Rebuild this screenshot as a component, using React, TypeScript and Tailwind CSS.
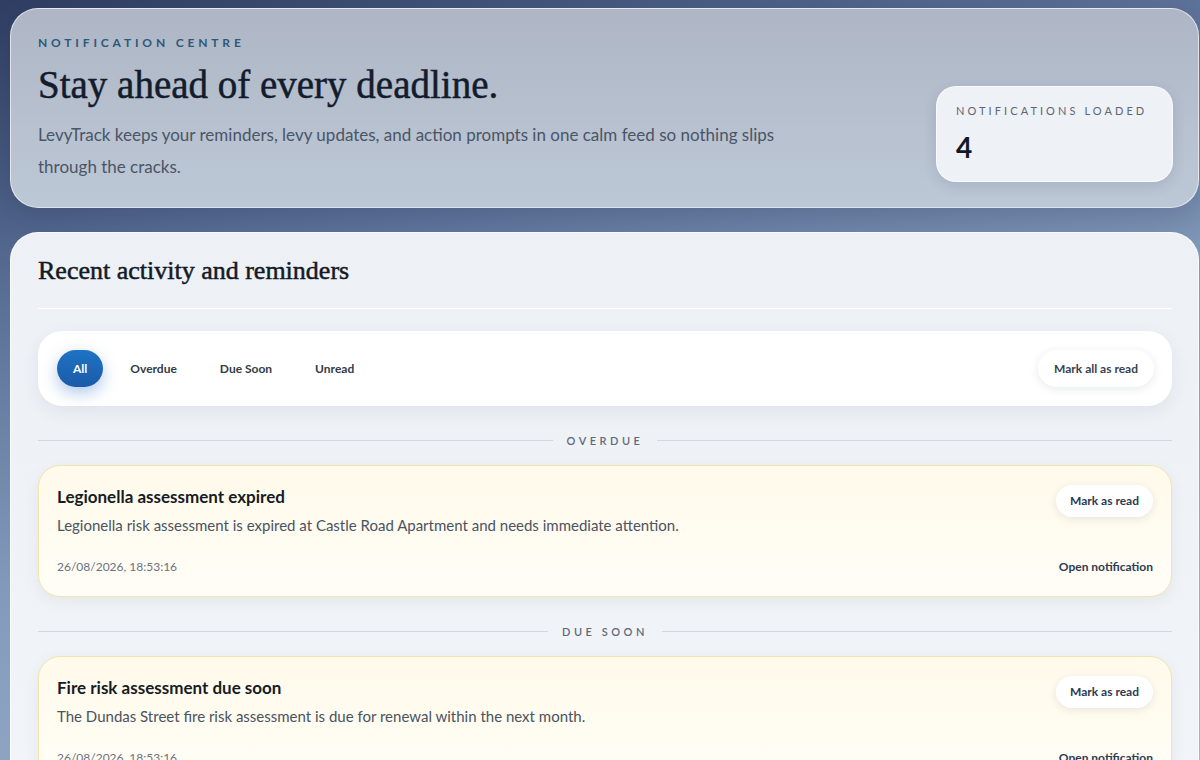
import { useState } from 'react'

type Notice = {
  id: string
  group: 'Overdue' | 'Due Soon'
  title: string
  body: string
  stamp: string
}

const notices: Notice[] = [
  {
    id: 'n1',
    group: 'Overdue',
    title: 'Legionella assessment expired',
    body: 'Legionella risk assessment is expired at Castle Road Apartment and needs immediate attention.',
    stamp: '26/08/2026, 18:53:16',
  },
  {
    id: 'n2',
    group: 'Due Soon',
    title: 'Fire risk assessment due soon',
    body: 'The Dundas Street fire risk assessment is due for renewal within the next month.',
    stamp: '26/08/2026, 18:53:16',
  },
]

const filters = ['All', 'Overdue', 'Due Soon', 'Unread']

const sans = "font-['Lato','Noto_Sans',sans-serif]"
// regular serif with a hairline stroke, closer to the medium weight in the design
const serif = "font-['Liberation_Serif','Times_New_Roman',serif] [-webkit-text-stroke:0.5px_currentColor]"

function Divider({ label }: { label: string }) {
  return (
    <div className="mt-[27px] mb-[18px] flex h-[14px] items-center gap-[14px]">
      <div className="h-px flex-1 bg-[#cfd8e3]" />
      <span className="text-[11px] font-semibold uppercase leading-none tracking-[0.32em] text-[#5f6b7a]">{label}</span>
      <div className="h-px flex-1 bg-[#cfd8e3]" />
    </div>
  )
}

function NoticeCard({ n }: { n: Notice }) {
  return (
    <article className="rounded-[22px] border border-[#f1e4ae] bg-[linear-gradient(180deg,#fffaea_0%,#fffdf7_100%)] px-[18px] pt-[19px] pb-[20px] shadow-[0_4px_14px_rgba(120,110,60,0.08)]">
      <div className="flex items-start justify-between gap-4">
        <div>
          <h3 className="text-[17px] font-bold leading-[24px] text-[#161c26]">{n.title}</h3>
          <p className="mt-[5px] text-[15px] leading-[22px] text-[#4a5361]">{n.body}</p>
        </div>
        <button
          type="button"
          className="h-[32px] shrink-0 rounded-full bg-white px-[14px] text-[12px] font-bold text-[#2b3b52] shadow-[0_2px_8px_rgba(30,40,60,0.10)]"
        >
          Mark as read
        </button>
      </div>
      <div className="mt-[22px] flex items-center justify-between text-[12px] leading-[18px]">
        <span className="text-[#6a7280]">{n.stamp}</span>
        <button type="button" className="font-bold text-[#2b3b52]">
          Open notification
        </button>
      </div>
    </article>
  )
}

export default function App() {
  const [active, setActive] = useState('All')

  return (
    <div
      className={`${sans} min-h-[760px] overflow-hidden bg-[linear-gradient(165deg,#2f3e62_0%,#5a6f96_26%,#839bbb_52%,#a6b8d0_100%)] pt-[8px] pl-[10px] pr-px`}
    >
      <section className="flex items-end justify-between rounded-[28px] border border-white/60 bg-[linear-gradient(180deg,#aeb6c5_0%,#b7c1d0_60%,#bdc8d7_100%)] pt-[26px] pb-[24px] pl-[27px] pr-[25px] shadow-[0_10px_30px_rgba(20,30,60,0.18)]">
        <div>
          <p className="text-[12px] font-bold uppercase leading-[16px] tracking-[0.32em] text-[#2e5878]">Notification centre</p>
          <h1 className={`${serif} mt-[12px] text-[39px] leading-[44px] text-[#131c2c]`}>Stay ahead of every deadline.</h1>
          <p className="mt-[12px] w-[770px] text-[17px] leading-[32px] text-[#4a5566]">
            LevyTrack keeps your reminders, levy updates, and action prompts in one calm feed so nothing slips through the cracks.
          </p>
        </div>
        <div className="mb-px w-[237px] rounded-[20px] border border-white/70 bg-[#eef1f6] px-[19px] pt-[16px] pb-[18px] shadow-[0_4px_14px_rgba(20,30,60,0.12)]">
          <p className="text-[11px] uppercase leading-[16px] tracking-[0.28em] text-[#5f6672]">Notifications loaded</p>
          <p className="mt-[12px] text-[28px] font-bold leading-[32px] text-[#111827]">4</p>
        </div>
      </section>

      <main className="mt-[24px] rounded-t-[28px] border border-white/70 bg-[linear-gradient(180deg,#edf0f5_0%,#f1f4f8_100%)] pl-[27px] pr-[26px] pt-[23px] pb-[40px]">
        <header className="border-b border-white pb-[22px]">
          <h2 className={`${serif} text-[26px] leading-[30px] text-[#141a24]`}>Recent activity and reminders</h2>
        </header>

        <div className="mt-[22px] flex items-center justify-between rounded-[24px] bg-white py-[19px] pl-[19px] pr-[18px] shadow-[0_6px_18px_rgba(40,60,90,0.07)]">
          <div className="flex items-center gap-[11px]">
            {filters.map((f) => (
              <button
                key={f}
                type="button"
                onClick={() => setActive(f)}
                className={
                  f === active
                    ? 'h-[37px] rounded-full bg-[linear-gradient(180deg,#1f73c4_0%,#1a5ba8_100%)] px-[16px] text-[12px] font-bold text-white shadow-[0_6px_16px_rgba(30,100,200,0.35)]'
                    : 'h-[37px] rounded-full px-[16px] text-[12px] font-bold text-[#333b48]'
                }
              >
                {f}
              </button>
            ))}
          </div>
          <button
            type="button"
            className="h-[37px] rounded-full bg-white px-[16px] text-[12px] font-bold text-[#3a4250] shadow-[0_2px_10px_rgba(30,40,60,0.10)]"
          >
            Mark all as read
          </button>
        </div>

        {notices.map((n) => (
          <div key={n.id}>
            <Divider label={n.group} />
            <NoticeCard n={n} />
          </div>
        ))}
      </main>
    </div>
  )
}
